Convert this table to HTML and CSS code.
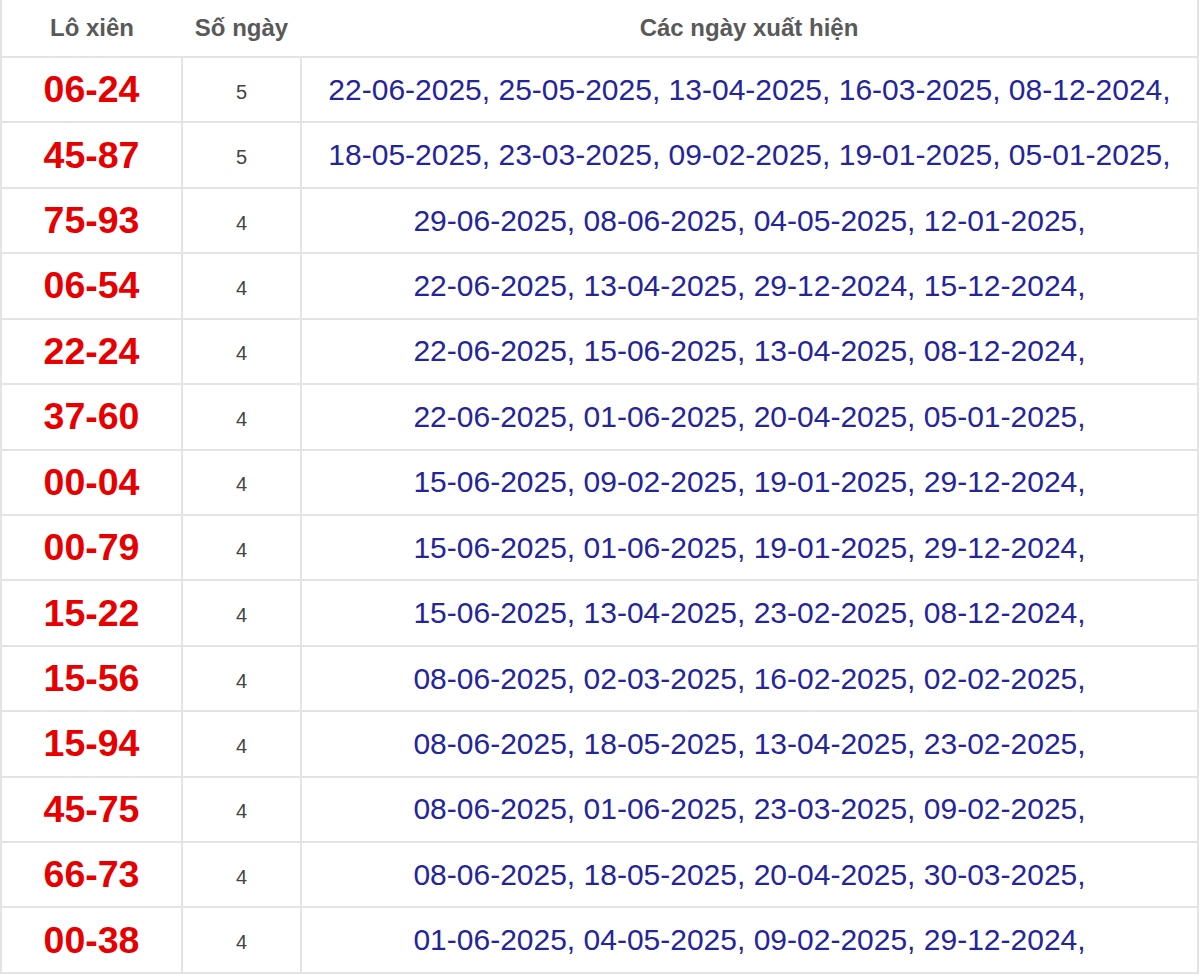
FILE: index.html
```html
<!DOCTYPE html>
<html lang="vi">
<head>
<meta charset="utf-8">
<title>Lô xiên</title>
<link rel="stylesheet" href="styles.css">
</head>
<body>
<table class="lx-table">
  <colgroup>
    <col class="c-pair">
    <col class="c-count">
    <col class="c-dates">
  </colgroup>
  <thead>
    <tr class="head-row">
      <th>Lô xiên</th>
      <th>Số ngày</th>
      <th>Các ngày xuất hiện</th>
    </tr>
  </thead>
  <tbody>
    <tr><td class="pair">06-24</td><td class="count">5</td><td class="dates">22-06-2025, 25-05-2025, 13-04-2025, 16-03-2025, 08-12-2024,</td></tr>
    <tr><td class="pair">45-87</td><td class="count">5</td><td class="dates">18-05-2025, 23-03-2025, 09-02-2025, 19-01-2025, 05-01-2025,</td></tr>
    <tr><td class="pair">75-93</td><td class="count">4</td><td class="dates">29-06-2025, 08-06-2025, 04-05-2025, 12-01-2025,</td></tr>
    <tr><td class="pair">06-54</td><td class="count">4</td><td class="dates">22-06-2025, 13-04-2025, 29-12-2024, 15-12-2024,</td></tr>
    <tr><td class="pair">22-24</td><td class="count">4</td><td class="dates">22-06-2025, 15-06-2025, 13-04-2025, 08-12-2024,</td></tr>
    <tr><td class="pair">37-60</td><td class="count">4</td><td class="dates">22-06-2025, 01-06-2025, 20-04-2025, 05-01-2025,</td></tr>
    <tr><td class="pair">00-04</td><td class="count">4</td><td class="dates">15-06-2025, 09-02-2025, 19-01-2025, 29-12-2024,</td></tr>
    <tr><td class="pair">00-79</td><td class="count">4</td><td class="dates">15-06-2025, 01-06-2025, 19-01-2025, 29-12-2024,</td></tr>
    <tr><td class="pair">15-22</td><td class="count">4</td><td class="dates">15-06-2025, 13-04-2025, 23-02-2025, 08-12-2024,</td></tr>
    <tr><td class="pair">15-56</td><td class="count">4</td><td class="dates">08-06-2025, 02-03-2025, 16-02-2025, 02-02-2025,</td></tr>
    <tr><td class="pair">15-94</td><td class="count">4</td><td class="dates">08-06-2025, 18-05-2025, 13-04-2025, 23-02-2025,</td></tr>
    <tr><td class="pair">45-75</td><td class="count">4</td><td class="dates">08-06-2025, 01-06-2025, 23-03-2025, 09-02-2025,</td></tr>
    <tr><td class="pair">66-73</td><td class="count">4</td><td class="dates">08-06-2025, 18-05-2025, 20-04-2025, 30-03-2025,</td></tr>
    <tr><td class="pair">00-38</td><td class="count">4</td><td class="dates">01-06-2025, 04-05-2025, 09-02-2025, 29-12-2024,</td></tr>
  </tbody>
</table>
</body>
</html>
```

FILE: styles.css
```css
html, body {
  margin: 0;
  padding: 0;
  background: #ffffff;
}

body {
  font-family: "Liberation Sans", Arial, sans-serif;
}

.lx-table {
  width: 1199px;
  border-collapse: collapse;
  table-layout: fixed;
  border-left: 2px solid #e4e4e4;
  border-right: 2px solid #e4e4e4;
  border-bottom: 2px solid #e4e4e4;
}

.c-pair { width: 181px; }
.c-count { width: 119px; }
.c-dates { width: auto; }

.head-row {
  height: 57px;
}

.head-row th {
  padding: 0;
  font-size: 24px;
  font-weight: bold;
  color: #595959;
  text-align: center;
  vertical-align: middle;
  border-bottom: 2px solid #e4e4e4;
}

tbody tr {
  height: 65.43px;
}

tbody td {
  padding: 0;
  text-align: center;
  vertical-align: middle;
  border-top: 2px solid #e4e4e4;
  border-left: 2px solid #e4e4e4;
  white-space: nowrap;
}

tbody td:first-child {
  border-left: none;
}

.pair {
  font-size: 37.5px;
  font-weight: bold;
  color: #e60000;
}

.count {
  padding-top: 5px;
  font-size: 20px;
  color: #444444;
}

.dates {
  font-size: 30px;
  color: #25259a;
}
```
